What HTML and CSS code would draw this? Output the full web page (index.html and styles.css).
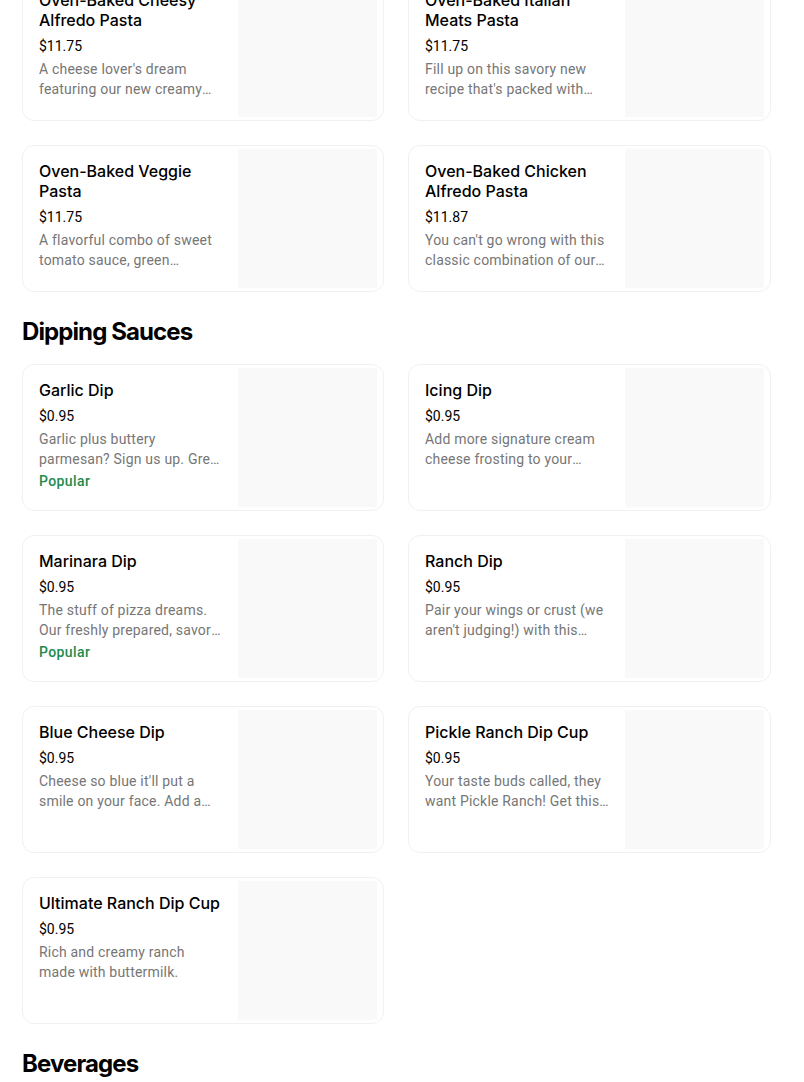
FILE: index.html
```html
<!DOCTYPE html>
<html>
<head>
<meta charset="utf-8">
<link rel="stylesheet" href="styles.css">
</head>
<body>
<main class="menu">
  <section class="section">
    <div class="grid">
      <div class="card">
        <div class="info">
          <div class="title">Oven-Baked Cheesy Alfredo Pasta</div>
          <div class="price">$11.75</div>
          <div class="desc">A cheese lover's dream featuring our new creamy alfredo sauce and a blend of cheeses.</div>
        </div>
        <div class="thumb"></div>
      </div>
      <div class="card">
        <div class="info">
          <div class="title">Oven-Baked Italian Meats Pasta</div>
          <div class="price">$11.75</div>
          <div class="desc">Fill up on this savory new recipe that's packed with pepperoni and Italian sausage.</div>
        </div>
        <div class="thumb"></div>
      </div>
      <div class="card">
        <div class="info">
          <div class="title">Oven-Baked Veggie Pasta</div>
          <div class="price">$11.75</div>
          <div class="desc">A flavorful combo of sweet tomato sauce, green peppers, onions and mushrooms.</div>
        </div>
        <div class="thumb"></div>
      </div>
      <div class="card">
        <div class="info">
          <div class="title">Oven-Baked Chicken Alfredo Pasta</div>
          <div class="price">$11.87</div>
          <div class="desc">You can't go wrong with this classic combination of our creamy alfredo and chicken.</div>
        </div>
        <div class="thumb"></div>
      </div>
    </div>
  </section>

  <section class="section">
    <h2 class="heading">Dipping Sauces</h2>
    <div class="grid">
      <div class="card">
        <div class="info">
          <div class="title">Garlic Dip</div>
          <div class="price">$0.95</div>
          <div class="desc">Garlic plus buttery parmesan? Sign us up. Great for dipping your crust.</div>
          <div class="tag">Popular</div>
        </div>
        <div class="thumb"></div>
      </div>
      <div class="card">
        <div class="info">
          <div class="title">Icing Dip</div>
          <div class="price">$0.95</div>
          <div class="desc">Add more signature cream cheese frosting to your favorite sweet treats.</div>
        </div>
        <div class="thumb"></div>
      </div>
      <div class="card">
        <div class="info">
          <div class="title">Marinara Dip</div>
          <div class="price">$0.95</div>
          <div class="desc">The stuff of pizza dreams. Our freshly prepared, savory marinara sauce.</div>
          <div class="tag">Popular</div>
        </div>
        <div class="thumb"></div>
      </div>
      <div class="card">
        <div class="info">
          <div class="title">Ranch Dip</div>
          <div class="price">$0.95</div>
          <div class="desc">Pair your wings or crust (we aren't judging!) with this cool, creamy ranch.</div>
        </div>
        <div class="thumb"></div>
      </div>
      <div class="card">
        <div class="info">
          <div class="title">Blue Cheese Dip</div>
          <div class="price">$0.95</div>
          <div class="desc">Cheese so blue it'll put a smile on your face. Add a cup to any order.</div>
        </div>
        <div class="thumb"></div>
      </div>
      <div class="card">
        <div class="info">
          <div class="title">Pickle Ranch Dip Cup</div>
          <div class="price">$0.95</div>
          <div class="desc">Your taste buds called, they want Pickle Ranch! Get this tangy dip today.</div>
        </div>
        <div class="thumb"></div>
      </div>
      <div class="card">
        <div class="info">
          <div class="title">Ultimate Ranch Dip Cup</div>
          <div class="price">$0.95</div>
          <div class="desc">Rich and creamy ranch made with buttermilk.</div>
        </div>
        <div class="thumb"></div>
      </div>
    </div>
  </section>

  <section class="section">
    <h2 class="heading">Beverages</h2>
  </section>
</main>
</body>
</html>
```

FILE: styles.css
```css
* { box-sizing: border-box; }

html, body {
  margin: 0;
  padding: 0;
  background: #ffffff;
}

body {
  font-family: "Inter", "Liberation Sans", sans-serif;
  color: #000000;
  overflow: hidden;
}

.menu {
  width: 749px;
  margin: -26px 0 0 22px;
}

.section {
  margin: 0;
}

.heading {
  margin: 24px 0 16px;
  font-size: 24px;
  line-height: 32px;
  font-weight: 700;
  letter-spacing: -0.9px;
}

.grid {
  display: grid;
  grid-template-columns: 362px 363px;
  column-gap: 24px;
  row-gap: 24px;
}

.card {
  display: flex;
  height: 147px;
  border: 1px solid #f1f1f1;
  border-radius: 12px;
  overflow: hidden;
  background: #ffffff;
}

.info {
  flex: 1;
  min-width: 0;
  padding: 15px 14px 0 16px;
}

.title {
  font-size: 16px;
  line-height: 20px;
  font-weight: 500;
  color: #000000;
}

.price {
  margin-top: 6px;
  font-family: "Roboto", "Liberation Sans", sans-serif;
  font-size: 14px;
  line-height: 20px;
  font-weight: 400;
  color: #000000;
}

.desc {
  margin-top: 3px;
  font-family: "Roboto", "Liberation Sans", sans-serif;
  font-size: 14px;
  line-height: 20px;
  letter-spacing: 0.2px;
  color: #767676;
  display: -webkit-box;
  -webkit-line-clamp: 2;
  -webkit-box-orient: vertical;
  overflow: hidden;
}

.tag {
  margin-top: 2px;
  font-family: "Roboto", "Liberation Sans", sans-serif;
  font-size: 14px;
  line-height: 20px;
  font-weight: 500;
  letter-spacing: 0.4px;
  color: #1f8a4c;
}

.thumb {
  flex: 0 0 139px;
  margin: 3px 6px 3px 0;
  background: #f9f9f9;
}
```
